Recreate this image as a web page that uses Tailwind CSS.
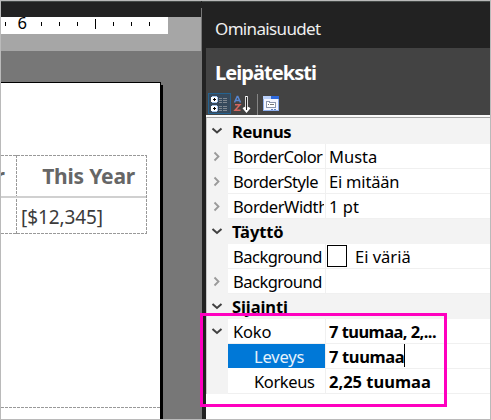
<!DOCTYPE html>
<html lang="fi">
<head>
<meta charset="utf-8">
<title>Ominaisuudet</title>
<script src="https://cdn.jsdelivr.net/npm/@tailwindcss/browser@4"></script>
</head>
<body class="w-[491px] h-[420px] overflow-hidden font-['Noto_Sans','Open_Sans',sans-serif] text-black">
<main class="relative flex w-[491px] h-[420px] border border-[#bababa] bg-[#222222] overflow-hidden">
  <!-- Report designer -->
  <section class="w-[200px] h-full shrink-0 flex flex-col bg-[#777777]">
    <div class="h-4 shrink-0 bg-[#222222] border-t border-[#454a48]"></div>
    <div class="h-[34px] shrink-0 bg-[#a6a6a6]">
      <svg class="block w-[167px] h-[17px] bg-white" viewBox="1 17 167 17" shape-rendering="crispEdges">
        <path d="M5 22h1v4h-1zM41 22h1v4h-1zM59 22h1v4h-1zM77 22h1v4h-1zM95 19h1v10h-1zM113 22h1v4h-1zM131 22h1v4h-1zM149 22h1v4h-1z" fill="#000"/>
        <text x="17.4" y="29" font-size="17" textLength="9.5" lengthAdjust="spacingAndGlyphs">6</text>
      </svg>
    </div>
    <div class="h-[31px] shrink-0"></div>
    <div class="flex-1 flex min-h-0">
      <div class="w-[160px] border-t border-r border-black bg-white pt-[72px] flex flex-col">
        <div class="flex h-[79px] shrink-0 relative">
          <svg class="absolute left-0 top-0 w-[160px] h-[79px]" viewBox="1 155 160 79" fill="none" stroke="#999999" shape-rendering="crispEdges">
            <path d="M1 155.5H147M1 233.5H147M16.5 155V234M146.5 155V234" stroke-dasharray="3 1"/>
            <path d="M1 197H146" stroke="#d0d0d0" stroke-width="2"/>
          </svg>
          <div class="w-[15px] h-[41px] overflow-hidden flex justify-end pr-[11px] text-[21px] leading-[43px] font-bold text-[#666666]">r</div>
          <div class="w-[130px]">
            <div class="h-[41px] text-right pr-[11px] leading-[43px] text-[21px] font-bold text-[#666666] tracking-[-0.2px] whitespace-nowrap">This Year</div>
            <div class="h-[37px] pl-[5px] leading-[43px] text-[19px] text-[#3b3b3b] tracking-[-0.1px] whitespace-nowrap">[$12,345]</div>
          </div>
        </div>
        <svg class="mt-[173px] block w-[159px] h-px shrink-0" viewBox="0 0 159 1" shape-rendering="crispEdges"><path d="M0 .5H159" stroke="#999" stroke-dasharray="3 1"/></svg>
      </div>
      <div class="w-[2px] mt-[3px] bg-black"></div>
    </div>
  </section>
  <div class="w-px mt-[7px] bg-[#777777] shrink-0"></div>
  <div class="w-1 bg-[#222222] border-t border-[#454a48] shrink-0"></div>

  <!-- Properties pane -->
  <section class="w-[284px] h-full flex flex-col bg-white">
    <div class="h-[47px] shrink-0 bg-[#222222] border-t border-[#454a48] pl-[9px] pt-[6px] text-[17px] leading-[42px] tracking-[-0.65px] text-[#eeeeee] whitespace-nowrap">Ominaisuudet</div>
    <div class="h-[67px] shrink-0 bg-[#434343] flex flex-col">
      <div class="h-[45px] pl-[9px] text-[20px] leading-[49px] tracking-[-0.95px] font-bold text-white whitespace-nowrap">Leipäteksti</div>
      <svg class="block w-[90px] h-[22px]" viewBox="206 93 90 22" shape-rendering="crispEdges">
        <rect x="208.5" y="93.5" width="22" height="20" fill="#36495c" stroke="#25628f"/>
        <path d="M211 97h6v5h-6zM211 106h6v5h-6z" fill="#fff"/>
        <path d="M212 96h5v1h-5zM212 105h5v1h-5zM212 102h5v1h-5zM212 111h5v1h-5zM217 97h1v5h-1zM217 106h1v5h-1z" fill="#a8c8f0"/>
        <path d="M213 99h3v1h-3zM214 98h1v3h-1zM213 108h3v1h-3zM214 107h1v3h-1z" fill="#000"/>
        <path d="M219 98h3v1h-3zM219 100h3v1h-3zM219 102h3v1h-3zM219 106h3v1h-3zM219 108h3v1h-3zM219 110h3v1h-3zM223 98h4v1h-4zM223 100h4v1h-4zM223 102h4v1h-4zM223 106h4v1h-4zM223 108h4v1h-4zM223 110h4v1h-4z" fill="#7f8790"/>
        <g fill="none" stroke-width="1.5" shape-rendering="auto">
          <path d="M234.500 102.500l2.700-6h.6l2.700 6M235.500 100.500h4" stroke="#5986cf"/>
          <path d="M235 104.700h5l-5 5.600h5.500" stroke="#d4675f"/>
          <path d="M246.500 96v14M243.500 107.500l3 3.500 3-3.500" stroke="#fff" stroke-width="2.600"/>
          <path d="M246.500 97v13" stroke="#222" stroke-width="1"/>
        </g>
        <path d="M257 94h1v21h-1z" fill="#858585"/>
        <path d="M263 96h16v15h-16z" fill="#8fb0ee"/>
        <path d="M263 96h8v3h-8z" fill="#b9cff8"/><path d="M271 96h8v3h-8z" fill="#2e69dc"/>
        <path d="M264 99h14v11h-14z" fill="#f4f6ff"/>
        <path d="M266 101h4v1h6v6h-10z" fill="#8b96ae"/><path d="M267 102h2v1h6v4h-8z" fill="#fff"/>
        <path d="M268 104h1v1h-1zM270 104h4v1h-4z" fill="#777"/><path d="M271 109h2v1h-2zM274 109h2v1h-2z" fill="#5b80c0"/>
      </svg>
    </div>
    <div class="h-[2px] shrink-0 bg-[#fafafa]"></div>
    <div class="shrink-0 border-t border-l border-t-[#a3a3a3] border-l-[#c6c6c6] text-[16.5px] leading-[26px] whitespace-nowrap">
      <div class="h-[26px] bg-[#f3f3f3] flex font-bold tracking-[-0.3px]">
        <svg class="w-[22px] h-[25px] shrink-0" viewBox="0 0 22 25"><path d="M5.500 10.500l4.500 4 4.500-4" fill="none" stroke="#404040" stroke-width="2"/></svg>
        <span class="pl-[3px] pt-px">Reunus</span>
      </div>
      <div class="h-[25px] flex">
        <div class="w-[21px] bg-[#f3f3f3] shrink-0"><svg class="w-[21px] h-[25px]" viewBox="0 0 21 25"><path d="M7.500 8.500l4 4-4 4" fill="none" stroke="#999" stroke-width="1.8"/></svg></div>
        <div class="w-[97px] pl-[5px] pr-px border-b border-[#f0f0f0] shrink-0"><div class="overflow-hidden h-6 tracking-[-0.5px]">BorderColor</div></div>
        <div class="flex-1 border-l border-b border-[#f0f0f0] pl-[3px] h-[25px]">Musta</div>
      </div>
      <div class="h-[25px] flex">
        <div class="w-[21px] bg-[#f3f3f3] shrink-0"><svg class="w-[21px] h-[25px]" viewBox="0 0 21 25"><path d="M7.500 8.500l4 4-4 4" fill="none" stroke="#999" stroke-width="1.8"/></svg></div>
        <div class="w-[97px] pl-[5px] pr-px border-b border-[#f0f0f0] shrink-0"><div class="overflow-hidden h-6 tracking-[-0.5px]">BorderStyle</div></div>
        <div class="flex-1 border-l border-b border-[#f0f0f0] pl-[3px] h-[25px] tracking-[-0.2px]">Ei mitään</div>
      </div>
      <div class="h-[25px] flex">
        <div class="w-[21px] bg-[#f3f3f3] shrink-0"><svg class="w-[21px] h-[25px]" viewBox="0 0 21 25"><path d="M7.500 8.500l4 4-4 4" fill="none" stroke="#999" stroke-width="1.8"/></svg></div>
        <div class="w-[97px] pl-[5px] pr-px border-b border-[#f0f0f0] shrink-0"><div class="overflow-hidden h-6 tracking-[-0.4px]">BorderWidth</div></div>
        <div class="flex-1 border-l border-b border-[#f0f0f0] pl-[3px] h-[25px]">1 pt</div>
      </div>
      <div class="h-[25px] bg-[#f3f3f3] flex font-bold tracking-[-0.1px]">
        <svg class="w-[22px] h-[25px] shrink-0" viewBox="0 0 22 25"><path d="M5.500 10l4.500 4 4.500-4" fill="none" stroke="#404040" stroke-width="2"/></svg>
        <span class="pl-[3px]">Täyttö</span>
      </div>
      <div class="h-[25px] flex">
        <div class="w-[21px] bg-[#f3f3f3] shrink-0"></div>
        <div class="w-[97px] pl-[5px] pr-px border-b border-[#f0f0f0] shrink-0"><div class="overflow-hidden h-6 tracking-[-0.5px]">Background</div></div>
        <div class="flex-1 border-l border-b border-[#f0f0f0] pl-px pt-px h-[25px] flex"><span class="w-5 h-[22px] border border-black"></span><span class="pl-[8px] -mt-px">Ei väriä</span></div>
      </div>
      <div class="h-[25px] flex">
        <div class="w-[21px] bg-[#f3f3f3] shrink-0"><svg class="w-[21px] h-[25px]" viewBox="0 0 21 25"><path d="M7.500 8.500l4 4-4 4" fill="none" stroke="#999" stroke-width="1.8"/></svg></div>
        <div class="w-[97px] pl-[5px] pr-px border-b border-[#f0f0f0] shrink-0"><div class="overflow-hidden h-6 tracking-[-0.5px]">Background</div></div>
        <div class="flex-1 border-l border-b border-[#f0f0f0] h-[25px]"></div>
      </div>
      <div class="h-[25px] bg-[#f3f3f3] flex font-bold tracking-[-0.1px]">
        <svg class="w-[22px] h-[25px] shrink-0" viewBox="0 0 22 25"><path d="M5.500 10l4.500 4 4.500-4" fill="none" stroke="#404040" stroke-width="2"/></svg>
        <span class="pl-[3px]">Sijainti</span>
      </div>
      <div class="h-[25px] flex">
        <div class="w-[21px] bg-[#f3f3f3] shrink-0"><svg class="w-[21px] h-[25px]" viewBox="0 0 21 25"><path d="M5.500 10l4.500 4 4.500-4" fill="none" stroke="#404040" stroke-width="2"/></svg></div>
        <div class="w-[97px] pl-[5px] border-b border-[#f0f0f0] shrink-0 tracking-[-0.2px]">Koko</div>
        <div class="flex-1 border-l border-b border-[#f0f0f0] pl-[3px] h-[25px] font-bold tracking-[-0.55px]">7 tuumaa, 2,...</div>
      </div>
      <div class="h-[25px] flex">
        <div class="w-[21px] bg-[#f3f3f3] shrink-0"></div>
        <div class="w-[97px] h-6 pl-[26px] bg-[#0078d7] text-[#e6f2fc] shrink-0 tracking-[-0.2px]">Leveys</div>
        <div class="flex-1 border-l border-b border-[#f0f0f0] pl-[3px] h-[25px] font-bold flex"><span class="tracking-[-0.35px]">7 tuumaa</span><span class="w-px h-[23px] bg-black"></span></div>
      </div>
      <div class="h-[25px] flex">
        <div class="w-[21px] bg-[#f3f3f3] shrink-0"></div>
        <div class="w-[97px] pl-[26px] border-b border-[#f0f0f0] shrink-0 tracking-[-0.4px]">Korkeus</div>
        <div class="flex-1 border-l border-b border-[#f0f0f0] pl-[3px] h-[25px] font-bold">2,25 tuumaa</div>
      </div>
    </div>
  </section>
  <!-- Highlight around the size properties -->
  <div class="absolute left-[199px] top-[312px] w-[247px] h-[94px] border-3 border-[#ff00bf]"></div>
</main>
</body>
</html>
